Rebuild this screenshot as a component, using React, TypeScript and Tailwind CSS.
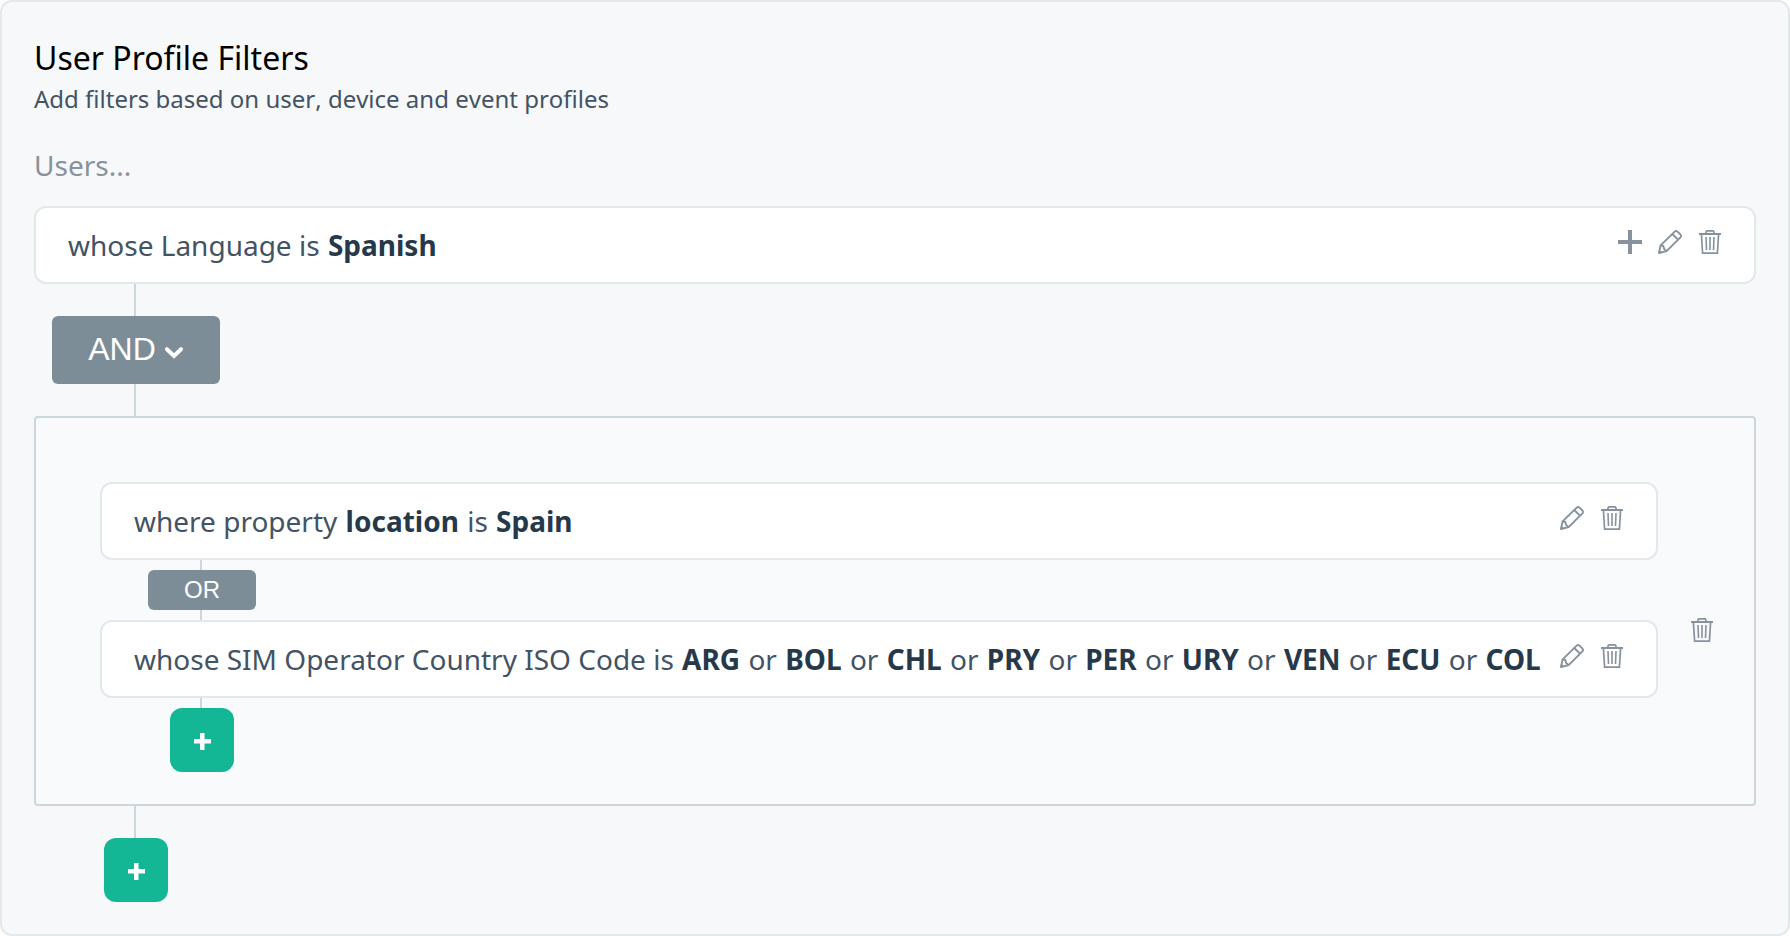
import React from "react";

function PlusIcon() {
  return (
    <svg className="size-6" viewBox="0 0 24 24" fill="currentColor" aria-hidden="true">
      <path d="M10 0h4v10h10v4H14v10h-4V14H0v-4h10z" />
    </svg>
  );
}

function PencilIcon() {
  return (
    <svg className="size-6" viewBox="0 0 24 24" fill="none" stroke="currentColor" strokeWidth="1.9" strokeLinejoin="round" aria-hidden="true">
      <path d="M1 23l1.6-7.6L16.7 1.6q1.400-1.200 2.800 0l2.900 2.900q1.200 1.400 0 2.800L8.600 21.100z" />
      <path d="M14.300 4l5.700 5.700M2.600 15.400l2.700.6.900 3 2.400 2.100" />
      <path d="M.4 23.600l.8-4.200 3.400 3.400z" fill="currentColor" stroke="none" />
    </svg>
  );
}

function TrashIcon() {
  return (
    <svg className="size-6" viewBox="0 0 24 24" fill="none" stroke="currentColor" strokeWidth="1.700" aria-hidden="true">
      <path d="M1 4h22" strokeWidth="2" />
      <path d="M8 3.900V2.200Q8 .8 9.400.8h5.200Q16 .8 16 2.200v1.700" />
      <path d="M3.400 4l1.200 19.200h14.800L20.600 4" />
      <path d="M8 7l.5 13M12 7v13M16 7l-.5 13" strokeWidth="1.600" />
    </svg>
  );
}

const icons = {
  add: { label: "Add condition", Icon: PlusIcon },
  edit: { label: "Edit filter", Icon: PencilIcon },
  remove: { label: "Delete filter", Icon: TrashIcon },
};

function IconButton({ kind }: { kind: keyof typeof icons }) {
  const { label, Icon } = icons[kind];
  return (
    <button type="button" aria-label={label} className="block size-6 shrink-0 text-[#87929c]">
      <Icon />
    </button>
  );
}

function FilterCard({ actions, children }: { actions: (keyof typeof icons)[]; children: React.ReactNode }) {
  return (
    <div className="flex min-h-[78px] items-center justify-between gap-4 rounded-xl border-2 border-[#e3e8ea] bg-white px-8">
      <p className="text-[28px] leading-10 text-[#435363]">{children}</p>
      <div className="flex h-[30px] shrink-0 items-start gap-4">
        {actions.map((kind) => (
          <IconButton key={kind} kind={kind} />
        ))}
      </div>
    </div>
  );
}

function Value({ children }: { children: React.ReactNode }) {
  return <strong className="mx-px font-bold text-[#26394a]">{children}</strong>;
}

function Connector({ short = false }: { short?: boolean }) {
  return <div className={short ? "mr-0.5 h-[10px] w-0.5 bg-[#cbd7dc]" : "mr-0.5 h-8 w-0.5 bg-[#cbd7dc]"} />;
}

function AddButton() {
  return (
    <button type="button" aria-label="Add filter" className="flex size-16 items-center justify-center rounded-xl bg-[#14b795] text-white">
      <svg className="size-5" viewBox="0 0 20 20" fill="currentColor" aria-hidden="true">
        <path d="M8 3h4.500v6H19v4.500h-6.500V20H8v-6.500H2V9h6z" />
      </svg>
    </button>
  );
}

const countries = ["ARG", "BOL", "CHL", "PRY", "PER", "URY", "VEN", "ECU", "COL"];

export default function App() {
  return (
    <section className="min-h-screen rounded-xl border-2 border-[#e3e8ea] bg-[#f7f8fa] p-8 font-['Noto_Sans',sans-serif]">
      <h1 className="text-[32px] leading-[48px] text-black">User Profile Filters</h1>
      <p className="text-2xl leading-[34px] text-[#435363] [font-kerning:none]">
        Add filters based on user, device and event profiles
      </p>
      <p className="mt-[30px] mb-[22px] text-[28px] leading-[38px] text-[#87929c]">Users...</p>

      <FilterCard actions={["add", "edit", "remove"]}>
        whose Language is <Value>Spanish</Value>
      </FilterCard>

      <div className="ml-[18px] flex w-[168px] flex-col items-center">
        <Connector />
        <button
          type="button"
          className="flex h-[68px] w-full items-center justify-center gap-2 rounded-md bg-[#7d8d97] pb-0.5 font-['Liberation_Sans',Arial,sans-serif] text-[32px] leading-10 text-white"
        >
          AND
          <svg className="mt-2 size-5" viewBox="0 0 20 20" fill="none" stroke="currentColor" strokeWidth="4" strokeLinecap="round" aria-hidden="true">
            <path d="M3 6.200L10 13l7-6.800" />
          </svg>
        </button>
        <Connector />
      </div>

      <div className="flex items-center gap-8 rounded border-2 border-[#cbd7dc] bg-[#f9fafc] pt-16 pr-10 pb-8 pl-16">
        <div className="min-w-0 flex-1">
          <FilterCard actions={["edit", "remove"]}>
            where property <Value>location</Value> is <Value>Spain</Value>
          </FilterCard>
          <div className="ml-12 flex w-[108px] flex-col items-center">
            <Connector short />
            <div className="flex h-10 w-full items-center justify-center rounded-md bg-[#7d8d97] font-['Liberation_Sans',Arial,sans-serif] text-2xl text-white">
              OR
            </div>
            <Connector short />
          </div>
          <FilterCard actions={["edit", "remove"]}>
            whose SIM Operator Country ISO Code is{" "}
            {countries.map((code, index) => (
              <React.Fragment key={code}>
                {index > 0 && " or "}
                <Value>{code}</Value>
              </React.Fragment>
            ))}
          </FilterCard>
          <div className="ml-12 flex w-[108px] flex-col items-center">
            <Connector short />
            <AddButton />
          </div>
        </div>
        <div className="flex h-[30px] items-end">
          <IconButton kind="remove" />
        </div>
      </div>

      <div className="ml-[18px] flex w-[168px] flex-col items-center">
        <Connector />
        <AddButton />
      </div>
    </section>
  );
}
